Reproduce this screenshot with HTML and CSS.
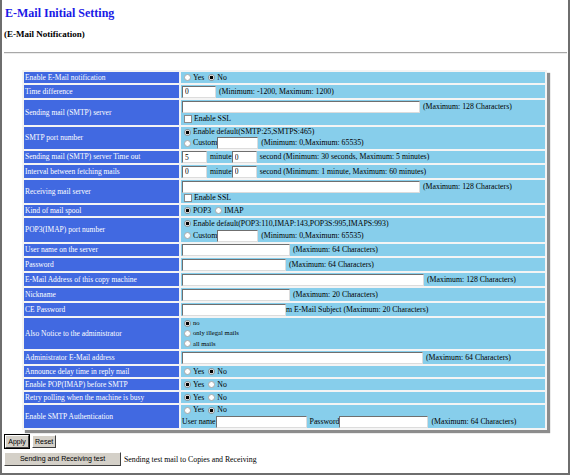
FILE: index.html
```html
<!DOCTYPE html>
<html>
<head>
<meta charset="utf-8">
<title>E-Mail Initial Setting</title>
<link rel="stylesheet" href="styles.css">
</head>
<body>
<div class="frame">
  <h1 class="title">E-Mail Initial Setting</h1>
  <h2 class="subtitle">(E-Mail Notification)</h2>
  <hr class="rule">
  <div class="panel">
    <table class="grid">
      <tr class="h11">
        <td class="lbl">Enable E-Mail notification</td>
        <td class="val"><div class="ln l11"><input type="radio" class="rb" name="en"><span class="opt">Yes</span><input type="radio" class="rb" name="en" checked><span class="opt">No</span></div></td>
      </tr>
      <tr class="h13">
        <td class="lbl">Time difference</td>
        <td class="val"><div class="ln l13"><input class="tx w34" value="0"><span class="sp">(Minimum: -1200, Maximum: 1200)</span></div></td>
      </tr>
      <tr class="h25">
        <td class="lbl">Sending mail (SMTP) server</td>
        <td class="val"><div class="ln l13"><input class="tx w238"><span class="sp">(Maximum: 128 Characters)</span></div><div class="ln l12"><input type="checkbox" class="cb">Enable SSL</div></td>
      </tr>
      <tr class="h22">
        <td class="lbl">SMTP port number</td>
        <td class="val"><div class="ln l10"><input type="radio" class="rb" name="sp" checked>Enable default(SMTP:25,SMTPS:465)</div><div class="ln l12"><input type="radio" class="rb" name="sp">Custom<input class="tx w41 ml1"><span class="sp">(Minimum: 0,Maximum: 65535)</span></div></td>
      </tr>
      <tr class="h12">
        <td class="lbl">Sending mail (SMTP) server Time out</td>
        <td class="val"><div class="ln l12"><input class="tx w25" value="5"><span class="sp">minute</span><input class="tx w25 ml2" value="0"><span class="sp">second (Minimum: 30 seconds, Maximum: 5 minutes)</span></div></td>
      </tr>
      <tr class="h13">
        <td class="lbl">Interval between fetching mails</td>
        <td class="val"><div class="ln l13"><input class="tx w25" value="0"><span class="sp">minute</span><input class="tx w25 ml2" value="0"><span class="sp">second (Minimum: 1 minute, Maximum: 60 minutes)</span></div></td>
      </tr>
      <tr class="h23">
        <td class="lbl">Receiving mail server</td>
        <td class="val"><div class="ln l13"><input class="tx w238"><span class="sp">(Maximum: 128 Characters)</span></div><div class="ln l10"><input type="checkbox" class="cb">Enable SSL</div></td>
      </tr>
      <tr class="h11">
        <td class="lbl">Kind of mail spool</td>
        <td class="val"><div class="ln l11"><input type="radio" class="rb" name="ks" checked><span class="opt">POP3</span><input type="radio" class="rb" name="ks"><span class="opt">IMAP</span></div></td>
      </tr>
      <tr class="h24">
        <td class="lbl">POP3(IMAP) port number</td>
        <td class="val"><div class="ln l11"><input type="radio" class="rb" name="pp" checked>Enable default(POP3:110,IMAP:143,POP3S:995,IMAPS:993)</div><div class="ln l13"><input type="radio" class="rb" name="pp">Custom<input class="tx w41 ml1"><span class="sp">(Minimum: 0,Maximum: 65535)</span></div></td>
      </tr>
      <tr class="h12">
        <td class="lbl">User name on the server</td>
        <td class="val"><div class="ln l12"><input class="tx w108"><span class="sp">(Maximum: 64 Characters)</span></div></td>
      </tr>
      <tr class="h13">
        <td class="lbl">Password</td>
        <td class="val"><div class="ln l13"><input type="password" class="tx w104"><span class="sp">(Maximum: 64 Characters)</span></div></td>
      </tr>
      <tr class="h13">
        <td class="lbl">E-Mail Address of this copy machine</td>
        <td class="val"><div class="ln l13"><input class="tx w242"><span class="sp">(Maximum: 128 Characters)</span></div></td>
      </tr>
      <tr class="h13">
        <td class="lbl">Nickname</td>
        <td class="val"><div class="ln l13"><input class="tx w108"><span class="sp">(Maximum: 20 Characters)</span></div></td>
      </tr>
      <tr class="h13">
        <td class="lbl">CE Password</td>
        <td class="val"><div class="ln l13"><input type="password" class="tx w104"><span>m E-Mail Subject (Maximum: 20 Characters)</span></div></td>
      </tr>
      <tr class="h31">
        <td class="lbl">Also Notice to the administrator</td>
        <td class="val small"><div class="ln l10"><input type="radio" class="rb" name="an" checked>no</div><div class="ln l10"><input type="radio" class="rb" name="an">only illegal mails</div><div class="ln l11"><input type="radio" class="rb" name="an">all mails</div></td>
      </tr>
      <tr class="h13">
        <td class="lbl">Administrator E-Mail address</td>
        <td class="val"><div class="ln l13"><input class="tx w241"><span class="sp">(Maximum: 64 Characters)</span></div></td>
      </tr>
      <tr class="h11">
        <td class="lbl">Announce delay time in reply mail</td>
        <td class="val"><div class="ln l11"><input type="radio" class="rb" name="ad"><span class="opt">Yes</span><input type="radio" class="rb" name="ad" checked><span class="opt">No</span></div></td>
      </tr>
      <tr class="h11">
        <td class="lbl">Enable POP(IMAP) before SMTP</td>
        <td class="val"><div class="ln l11"><input type="radio" class="rb" name="pb" checked><span class="opt">Yes</span><input type="radio" class="rb" name="pb"><span class="opt">No</span></div></td>
      </tr>
      <tr class="h11">
        <td class="lbl">Retry polling when the machine is busy</td>
        <td class="val"><div class="ln l11"><input type="radio" class="rb" name="rp" checked><span class="opt">Yes</span><input type="radio" class="rb" name="rp"><span class="opt">No</span></div></td>
      </tr>
      <tr class="h23">
        <td class="lbl">Enable SMTP Authentication</td>
        <td class="val"><div class="ln l10"><input type="radio" class="rb" name="sa"><span class="opt">Yes</span><input type="radio" class="rb" name="sa" checked><span class="opt">No</span></div><div class="ln l13">User name<input class="tx w91 ml1"><span class="sp">Password</span><input type="password" class="tx w89"><span class="sp">(Maximum: 64 Characters)</span></div></td>
      </tr>
    </table>
  </div>
  <div class="buttons">
    <button class="btn btn-default">Apply</button>
    <button class="btn btn-reset">Reset</button>
  </div>
  <div class="testrow">
    <button class="btn btn-wide">Sending and Receiving test</button>
    <span class="testnote">Sending test mail to Copies and Receiving</span>
  </div>
</div>
</body>
</html>
```

FILE: styles.css
```css
html, body {
  margin: 0;
  padding: 0;
  height: 100%;
  background: #ffffff;
}

.frame {
  box-sizing: border-box;
  height: 100%;
  padding: 6px 1px 0 2px;
  border-left: 2px solid #6e6e6e;
  border-right: 2px solid #6e6e6e;
  border-bottom: 2px solid #6e6e6e;
  font-family: "Liberation Serif", "Times New Roman", serif;
  color: #000;
}

.title {
  margin: 0 0 0 1px;
  font-size: 12px;
  line-height: 14px;
  font-weight: bold;
  color: #1a1ae6;
}

.subtitle {
  margin: 8px 0 0 0;
  font-size: 9px;
  line-height: 12px;
  font-weight: bold;
}

.rule {
  margin: 12px 0 0 0;
  height: 0;
  border: 0;
  border-top: 1px solid #a8a8a8;
  border-bottom: 1px solid #ececec;
}

.panel {
  margin: 16px 0 0 18px;
}

.grid {
  border-collapse: separate;
  border-spacing: 2px;
  background: #f4f4f4;
  width: 525px;
  box-shadow: 3px 3px 1px #8c8c8c;
  font-size: 7.5px;
  line-height: 10px;
}

.grid td {
  padding: 0 1px;
}

.h11 td { height: 11px; }
.h12 td { height: 12px; }
.h13 td { height: 13px; }
.h22 td { height: 22px; }
.h23 td { height: 23px; }
.h24 td { height: 24px; }
.h25 td { height: 25px; }
.h31 td { height: 31px; }

.lbl {
  width: 153px;
  background: #4169e1;
  color: #ffffff;
  vertical-align: middle;
  white-space: nowrap;
}

.val {
  background: #87ceeb;
  color: #000;
  font-size: 7.8px;
  white-space: nowrap;
  vertical-align: middle;
}

.ln {
  display: flex;
  align-items: center;
  overflow: visible;
}

.l10 { height: 10px; }
.l11 { height: 11px; }
.l12 { height: 12px; }
.l13 { height: 13px; }

.val.small {
  font-size: 6.6px;
}

.opt {
  margin-right: 2px;
}

.sp {
  margin-left: 3px;
}

.ml1 { margin-left: 1px; }
.ml2 { margin-left: 3px; }

.rb {
  appearance: none;
  -webkit-appearance: none;
  box-sizing: border-box;
  flex: none;
  width: 7px;
  height: 7px;
  margin: 0 2px 0 2px;
  border: 1px solid #a9a9a9;
  border-radius: 50%;
  background: #ffffff;
}

.rb:checked {
  background: radial-gradient(circle, #000 0 1.6px, #ffffff 2.1px);
  border-color: #8a8a8a;
}

.cb {
  appearance: none;
  -webkit-appearance: none;
  box-sizing: border-box;
  flex: none;
  width: 8px;
  height: 8px;
  margin: 0 2px 0 2px;
  border: 1px solid #8a8a8a;
  background: #ffffff;
}

.tx {
  box-sizing: border-box;
  flex: none;
  height: 12px;
  margin: 0;
  padding: 0 2px;
  border: 1px solid;
  border-color: #6f6f6f #dcdcdc #dcdcdc #6f6f6f;
  background: #ffffff;
  font-family: "Liberation Serif", "Times New Roman", serif;
  font-size: 7.5px;
  line-height: 10px;
  outline: none;
}

.w25 { width: 25px; }
.w34 { width: 34px; }
.w41 { width: 41px; }
.w89 { width: 89px; }
.w91 { width: 91px; }
.w104 { width: 104px; }
.w108 { width: 108px; }
.w238 { width: 238px; }
.w241 { width: 241px; }
.w242 { width: 242px; }

.buttons {
  margin: 5px 0 0 1px;
  display: flex;
  gap: 3px;
}

.btn {
  box-sizing: border-box;
  height: 13px;
  padding: 0 2px;
  margin: 0;
  font-family: "Liberation Sans", Arial, sans-serif;
  font-size: 7px;
  line-height: 10px;
  color: #000;
  background: #d4d0c8;
  border: 1px solid;
  border-color: #ffffff #404040 #404040 #ffffff;
}

.btn-default {
  outline: 1px solid #000;
  outline-offset: 0;
  width: 24px;
}

.btn-reset {
  width: 24px;
}

.testrow {
  margin: 4px 0 0 0;
  display: flex;
  align-items: center;
  gap: 3px;
}

.btn-wide {
  width: 117px;
  height: 14px;
}

.testnote {
  font-size: 7.8px;
}
```
